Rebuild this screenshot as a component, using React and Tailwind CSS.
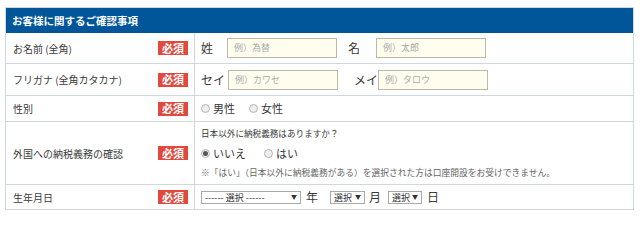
const font = { fontFamily: '"Noto Sans CJK JP", "Noto Sans", sans-serif' };

function Badge() {
  return (
    <span className="inline-flex h-[14px] w-[30px] shrink-0 items-center justify-center bg-[#e4473b] text-[11px] font-bold leading-none text-white">
      必須
    </span>
  );
}

function Row({ label, height, children, last }) {
  return (
    <div className={`flex ${height} ${last ? "" : "border-b"} border-[#cfd7df]`}>
      <div className="flex w-[189px] shrink-0 items-center justify-between border-r border-[#cfd7df] pl-[7px] pr-[6px] text-[10px] text-[#3a3a3a]">
        <span className="whitespace-nowrap">{label}</span>
        <Badge />
      </div>
      <div className="flex flex-1 items-center pl-[6px] text-[12px] text-[#3a3a3a]">{children}</div>
    </div>
  );
}

function Field({ label, labelW, placeholder }) {
  return (
    <div className="flex items-center">
      <span className={`${labelW} shrink-0`}>{label}</span>
      <div className="flex h-[20px] w-[110px] items-center border border-[#bdb9a8] bg-[#fffdee] pl-[6px] text-[9px] text-[#aaa]">
        {placeholder}
      </div>
    </div>
  );
}

function Radio({ checked, label }) {
  return (
    <span className="inline-flex items-center text-[11px]">
      <span className="mr-[3px] flex h-[9px] w-[9px] items-center justify-center rounded-full border border-[#b5b5b5] bg-[#eee]">
        {checked && <span className="h-[5px] w-[5px] rounded-full bg-[#555]" />}
      </span>
      <span>{label}</span>
    </span>
  );
}

function Select({ w, text }) {
  return (
    <div className={`flex h-[13px] ${w} shrink-0 items-center justify-between whitespace-nowrap border border-[#a9a9a9] bg-white px-[3px] text-[9px] leading-none text-[#333]`}>
      <span>{text}</span>
      <span className="text-[6px]">▼</span>
    </div>
  );
}

export default function App() {
  return (
    <div className="h-[223px] w-[640px] bg-white pl-[5px] pt-[7px]" style={font}>
      <div className="w-[629px] border border-[#cfd7df]">
        <div className="flex h-[25px] items-center bg-[#01569a] pl-[6px] text-[10.5px] font-bold text-white">
          お客様に関するご確認事項
        </div>
        <Row label="お名前 (全角)" height="h-[31px]">
          <Field label="姓" labelW="w-[26px]" placeholder="例）為替" />
          <div className="ml-[11px]">
            <Field label="名" labelW="w-[28px]" placeholder="例）太郎" />
          </div>
        </Row>
        <Row label="フリガナ (全角カタカナ)" height="h-[32px]">
          <Field label="セイ" labelW="w-[27px]" placeholder="例）カワセ" />
          <div className="ml-[16px]">
            <Field label="メイ" labelW="w-[24px]" placeholder="例）タロウ" />
          </div>
        </Row>
        <Row label="性別" height="h-[26px]">
          <div className="flex items-center gap-[14px]">
            <Radio label="男性" />
            <Radio label="女性" />
          </div>
        </Row>
        <Row label="外国への納税義務の確認" height="h-[63px]">
          <div className="flex flex-col">
            <div className="text-[8.6px] leading-[20px]">日本以外に納税義務はありますか？</div>
            <div className="flex items-center gap-[18px] leading-[20px]">
              <Radio checked label="いいえ" />
              <Radio label="はい" />
            </div>
            <div className="text-[8.75px] leading-[20px] text-[#666]">
              ※「はい」（日本以外に納税義務がある）を選択された方は口座開設をお受けできません。
            </div>
          </div>
        </Row>
        <Row label="生年月日" height="h-[24px]" last>
          <div className="flex items-center">
            <Select w="w-[100px]" text="------ 選択 ------" />
            <span className="ml-[5px] mr-[12px]">年</span>
            <Select w="w-[35px]" text="選択" />
            <span className="ml-[4px] mr-[7px]">月</span>
            <Select w="w-[34px]" text="選択" />
            <span className="ml-[5px]">日</span>
          </div>
        </Row>
      </div>
    </div>
  );
}
